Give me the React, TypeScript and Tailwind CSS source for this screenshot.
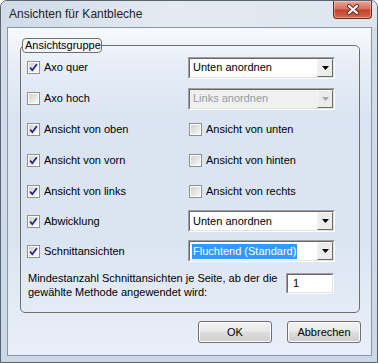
import React from "react";

function Check({ checked }: { checked: boolean }) {
  return (
    <div className="w-[13px] h-[13px] shrink-0 border border-[#8e8f8f] bg-white p-[1px]">
      <div className="w-full h-full bg-[linear-gradient(135deg,#d2d2d2_0%,#ececec_70%,#fbfbfb_100%)] flex items-center justify-center">
        {checked && (
          <svg width="9" height="9" viewBox="0 0 9 9">
            <path d="M1.2 4.6 L3.3 7.2 L7.8 1.2" fill="none" stroke="#1e1e8e" strokeWidth="1.7" />
          </svg>
        )}
      </div>
    </div>
  );
}

function CheckRow({ label, checked, className = "" }: { label: string; checked: boolean; className?: string }) {
  return (
    <div className={"flex items-center gap-[4px] " + className}>
      <Check checked={checked} />
      <span className="leading-[13px]">{label}</span>
    </div>
  );
}

function Sunken({ children, className = "", inner = "bg-white" }: { children: React.ReactNode; className?: string; inner?: string }) {
  return (
    <div className={"border border-t-[#a0a0a0] border-l-[#a0a0a0] border-b-white border-r-white " + className}>
      <div className={"w-full h-full border border-t-[#696969] border-l-[#696969] border-b-[#e3e3e3] border-r-[#e3e3e3] flex items-center " + inner}>
        {children}
      </div>
    </div>
  );
}

function DropBtn({ disabled }: { disabled?: boolean }) {
  return (
    <div className="w-[16px] h-full shrink-0 border border-t-[#f4f4f4] border-l-[#f4f4f4] border-b-[#6a6a6a] border-r-[#6a6a6a] bg-[#ececec] flex items-center justify-center">
      <svg width="7" height="4" viewBox="0 0 7 4">
        <path d="M0 0 H7 L3.5 4 Z" fill={disabled ? "#a8a8a8" : "#000"} />
      </svg>
    </div>
  );
}

function Select({ value, disabled, highlight }: { value: string; disabled?: boolean; highlight?: boolean }) {
  return (
    <Sunken className="w-[147px] h-[22px]" inner={disabled ? "bg-[#f0f0f0]" : "bg-white"}>
      <div className="flex-1 pl-[2px] flex items-center">
        <span
          className={
            "px-[1px] leading-[15px] " +
            (highlight ? "bg-[#3399ff] text-white" : disabled ? "text-[#9a9a9a]" : "text-black")
          }
        >
          {value}
        </span>
      </div>
      <DropBtn disabled={disabled} />
    </Sunken>
  );
}

function Btn({ label }: { label: string }) {
  return (
    <div className="w-[74px] h-[22px] rounded-[3px] border border-[#707070] bg-[linear-gradient(to_bottom,#f2f2f2_0%,#ebebeb_45%,#dddddd_50%,#cfcfcf_100%)] flex items-center justify-center shadow-[inset_0_0_0_1px_#fcfcfc]">
      <span className="text-[11px]">{label}</span>
    </div>
  );
}

export default function App() {
  return (
    <div className="w-[378px] h-[363px] bg-white font-['Liberation_Sans',Arial,sans-serif] text-[11px] text-black">
      <div className="relative w-full h-full rounded-t-[7px] border border-[#5a6470] bg-[linear-gradient(to_bottom,#d3deea_0%,#cbd8e8_100%)] flex flex-col">
        <div className="h-[26px] shrink-0 flex items-center pl-[8px] rounded-t-[6px] bg-[linear-gradient(to_right,#cfdbe8_0%,#e4eaf1_45%,#dde5ee_100%)]">
          <span className="text-[12px] text-[#1e1e1e]">Ansichten für Kantbleche</span>
        </div>
        <div className="absolute top-0 right-[5px] w-[39px] h-[18px] rounded-b-[4px] border border-t-0 border-[#6b2a22] bg-[linear-gradient(to_bottom,#e8a598_0%,#d6705e_45%,#c4412c_55%,#d46a4e_100%)] flex items-center justify-center shadow-[inset_0_0_0_1px_rgba(255,255,255,0.35)]">
          <svg width="14" height="11" viewBox="0 0 14 11">
            <path d="M3 2 L11 9 M11 2 L3 9" stroke="#5a2a25" strokeWidth="4" strokeLinecap="round" />
            <path d="M3 2 L11 9 M11 2 L3 9" stroke="#ffffff" strokeWidth="2.2" strokeLinecap="round" />
          </svg>
        </div>
        <div className="ml-[6px] mr-[5px] mb-[6px] flex-1 border border-[#8796a8] bg-[linear-gradient(to_bottom,#f7f9fc_0%,#e6edf6_12%,#dae4f2_28%,#dbe5f2_65%,#e9eff8_100%)] flex flex-col">
          <div className="relative ml-[12px] mr-[11px] mt-[17px] h-[268px] border border-[#6e6e6e] rounded-[5px] flex flex-col pl-[6px] pt-[6px]">
            <div className="absolute left-[1px] top-[-8px] w-[80px] h-[15px] border border-[#6e6e6e] rounded-[4px] bg-[#f3f6fb] flex items-center pl-[2px]">
              <span className="leading-[13px]">Ansichtsgruppe</span>
            </div>
            <div className="grid grid-cols-[161px_1fr]">
              <div className="h-[31px] flex items-center"><CheckRow label="Axo quer" checked /></div>
              <div className="h-[31px] flex items-center"><Select value="Unten anordnen" /></div>

              <div className="h-[31px] flex items-center"><CheckRow label="Axo hoch" checked={false} /></div>
              <div className="h-[31px] flex items-center"><Select value="Links anordnen" disabled /></div>

              <div className="h-[31px] flex items-center"><CheckRow label="Ansicht von oben" checked /></div>
              <div className="h-[31px] flex items-center"><CheckRow label="Ansicht von unten" checked={false} className="ml-[1px]" /></div>

              <div className="h-[31px] flex items-center"><CheckRow label="Ansicht von vorn" checked /></div>
              <div className="h-[31px] flex items-center"><CheckRow label="Ansicht von hinten" checked={false} className="ml-[1px]" /></div>

              <div className="h-[30px] flex items-center"><CheckRow label="Ansicht von links" checked /></div>
              <div className="h-[30px] flex items-center"><CheckRow label="Ansicht von rechts" checked={false} className="ml-[1px]" /></div>

              <div className="h-[30px] flex items-center"><CheckRow label="Abwicklung" checked /></div>
              <div className="h-[30px] flex items-center"><Select value="Unten anordnen" /></div>

              <div className="h-[30px] flex items-center"><CheckRow label="Schnittansichten" checked /></div>
              <div className="h-[30px] flex items-center"><Select value="Fluchtend (Standard)" highlight /></div>
            </div>
            <div className="mt-[5px] flex items-start">
              <div className="w-[259px] pl-[1px] leading-[14px]">
                Mindestanzahl Schnittansichten je Seite, ab der die gewählte Methode angewendet wird:
              </div>
              <Sunken className="w-[48px] h-[21px] mt-[2px]">
                <span className="pl-[5px]">1</span>
              </Sunken>
            </div>
          </div>
          <div className="mt-[8px] mr-[10px] flex justify-end gap-[15px]">
            <Btn label="OK" />
            <Btn label="Abbrechen" />
          </div>
        </div>
      </div>
    </div>
  );
}
